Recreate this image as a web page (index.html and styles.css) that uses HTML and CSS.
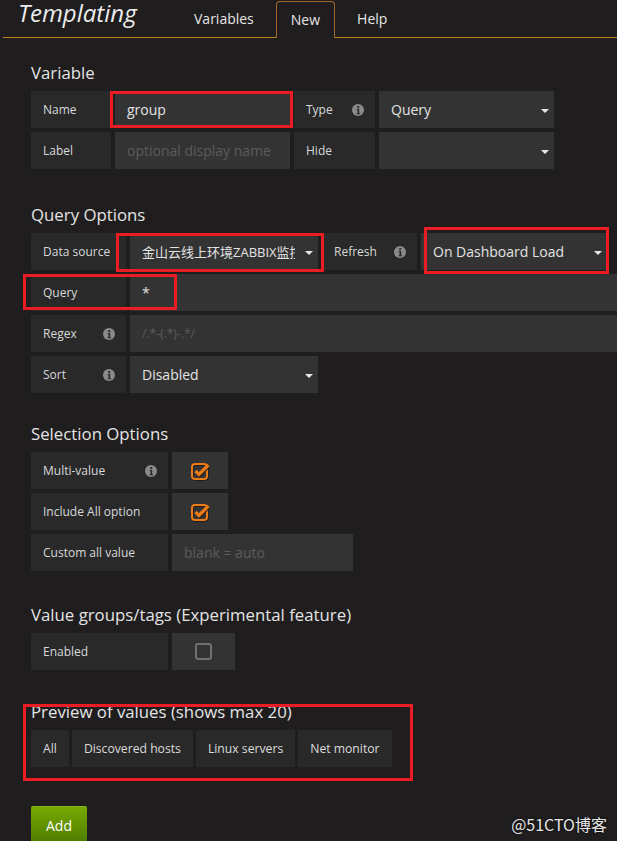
FILE: index.html
```html
<!DOCTYPE html>
<html>
<head>
<meta charset="utf-8">
<link rel="stylesheet" href="styles.css">
</head>
<body>
<div class="header">
  <div class="title">Templating</div>
  <div class="tabs">
    <div class="tab">Variables</div>
    <div class="tab active">New</div>
    <div class="tab">Help</div>
  </div>
</div>

<div class="content">
  <section class="sec mt-25">
    <h5>Variable</h5>
    <div class="rows">
      <div class="row">
        <div class="lbl w80">Name</div>
        <div class="inp w175">group</div>
        <div class="lbl w81">Type <svg class="info" viewBox="0 0 12 12"><circle cx="6" cy="6" r="6" fill="#8a8a8a"/><circle cx="6.2" cy="3.1" r="1.2" fill="#2a2a2a"/><path d="M4.6 5h2.6v4.2h0.9v1h-3.5v-1h0.9V6h-0.9z" fill="#2a2a2a"/></svg></div>
        <div class="sel w175"><span class="val">Query</span><i class="caret"></i></div>
      </div>
      <div class="row">
        <div class="lbl w80">Label</div>
        <div class="inp w175 ph">optional display name</div>
        <div class="lbl w81">Hide</div>
        <div class="sel w175"><span class="val"></span><i class="caret"></i></div>
      </div>
    </div>
  </section>

  <section class="sec mt-36">
    <h5>Query Options</h5>
    <div class="rows">
      <div class="row">
        <div class="lbl w95">Data source</div>
        <div class="sel w188"><span class="val cjk">金山云线上环境ZABBIX监控</span><i class="caret"></i></div>
        <div class="lbl w95">Refresh <svg class="info" viewBox="0 0 12 12"><circle cx="6" cy="6" r="6" fill="#8a8a8a"/><circle cx="6.2" cy="3.1" r="1.2" fill="#2a2a2a"/><path d="M4.6 5h2.6v4.2h0.9v1h-3.5v-1h0.9V6h-0.9z" fill="#2a2a2a"/></svg></div>
        <div class="sel w186"><span class="val">On Dashboard Load</span><i class="caret"></i></div>
      </div>
      <div class="row">
        <div class="lbl w95">Query</div>
        <div class="inp grow">*</div>
      </div>
      <div class="row">
        <div class="lbl w95">Regex <svg class="info" viewBox="0 0 12 12"><circle cx="6" cy="6" r="6" fill="#8a8a8a"/><circle cx="6.2" cy="3.1" r="1.2" fill="#2a2a2a"/><path d="M4.6 5h2.6v4.2h0.9v1h-3.5v-1h0.9V6h-0.9z" fill="#2a2a2a"/></svg></div>
        <div class="inp grow ph small">/.*-(.*)-.*/</div>
      </div>
      <div class="row">
        <div class="lbl w95">Sort <svg class="info" viewBox="0 0 12 12"><circle cx="6" cy="6" r="6" fill="#8a8a8a"/><circle cx="6.2" cy="3.1" r="1.2" fill="#2a2a2a"/><path d="M4.6 5h2.6v4.2h0.9v1h-3.5v-1h0.9V6h-0.9z" fill="#2a2a2a"/></svg></div>
        <div class="sel w188"><span class="val">Disabled</span><i class="caret"></i></div>
      </div>
    </div>
  </section>

  <section class="sec mt-31">
    <h5>Selection Options</h5>
    <div class="rows">
      <div class="row">
        <div class="lbl w137">Multi-value <svg class="info" viewBox="0 0 12 12"><circle cx="6" cy="6" r="6" fill="#8a8a8a"/><circle cx="6.2" cy="3.1" r="1.2" fill="#2a2a2a"/><path d="M4.6 5h2.6v4.2h0.9v1h-3.5v-1h0.9V6h-0.9z" fill="#2a2a2a"/></svg></div>
        <div class="chk w56"><svg class="tick" viewBox="0 0 24 22"><rect x="3" y="4" width="15" height="15" rx="3" fill="none" stroke="#1a1a1a" stroke-width="2" transform="translate(0.6 0.8)"/><rect x="3" y="4" width="15" height="15" rx="3" fill="none" stroke="#eb7b18" stroke-width="2"/><path d="M6.5 11l3.4 3.4L19.5 5" fill="none" stroke="#1a1a1a" stroke-width="3.4" transform="translate(0.6 0.8)"/><path d="M6.5 11l3.4 3.4L19.5 5" fill="none" stroke="#eb7b18" stroke-width="3.4"/></svg></div>
      </div>
      <div class="row">
        <div class="lbl w137">Include All option</div>
        <div class="chk w56"><svg class="tick" viewBox="0 0 24 22"><rect x="3" y="4" width="15" height="15" rx="3" fill="none" stroke="#1a1a1a" stroke-width="2" transform="translate(0.6 0.8)"/><rect x="3" y="4" width="15" height="15" rx="3" fill="none" stroke="#eb7b18" stroke-width="2"/><path d="M6.5 11l3.4 3.4L19.5 5" fill="none" stroke="#1a1a1a" stroke-width="3.4" transform="translate(0.6 0.8)"/><path d="M6.5 11l3.4 3.4L19.5 5" fill="none" stroke="#eb7b18" stroke-width="3.4"/></svg></div>
      </div>
      <div class="row">
        <div class="lbl w137">Custom all value</div>
        <div class="inp w181 ph">blank = auto</div>
      </div>
    </div>
  </section>

  <section class="sec mt-34">
    <h5>Value groups/tags (Experimental feature)</h5>
    <div class="rows">
      <div class="row">
        <div class="lbl w137">Enabled</div>
        <div class="chk w63"><span class="box"></span></div>
      </div>
    </div>
  </section>

  <section class="sec mt-32">
    <h5>Preview of values (shows max 20)</h5>
    <div class="tags">
      <div class="tag">All</div>
      <div class="tag">Discovered hosts</div>
      <div class="tag">Linux servers</div>
      <div class="tag">Net monitor</div>
    </div>
  </section>

  <div class="add">Add</div>
</div>

<div class="mark m-name"></div>
<div class="mark m-ds"></div>
<div class="mark m-query"></div>
<div class="mark m-refresh"></div>
<div class="mark m-preview"></div>

<div class="watermark">@51CTO博客</div>
</body>
</html>
```

FILE: styles.css
```css
* { box-sizing: border-box; }

html, body {
  margin: 0;
  height: 100%;
  overflow: hidden;
}

body {
  background: #1f1d1e;
  color: #d8d9da;
  font-family: "Open Sans", "Noto Sans CJK SC", sans-serif;
  position: relative;
}

/* header */
.header {
  margin-left: 3px;
  height: 38px;
  border-bottom: 1px solid #b8861c;
  display: flex;
  padding-left: 15px;
}

.title {
  width: 154px;
  font-size: 24px;
  font-style: italic;
  line-height: 26px;
  color: #ececec;
}

.tabs {
  display: flex;
  margin-top: 1px;
}

.tab {
  height: 37px;
  line-height: 36px;
  padding: 0 22px;
  font-size: 14px;
  color: #e6e6e6;
}

.tab.active {
  padding: 0 14px;
  border: 1px solid #a0662b;
  border-bottom: none;
  border-radius: 4px 4px 0 0;
  background: #1f1d1e;
}

/* content */
.content {
  padding-left: 31px;
}

.sec h5 {
  margin: 0 0 8px;
  font-size: 16.8px;
  line-height: 20px;
  font-weight: normal;
  color: #e4e4e4;
}

.mt-25 { margin-top: 25px; }
.mt-31 { margin-top: 31px; }
.mt-32 { margin-top: 32px; }
.mt-34 { margin-top: 34px; }
.mt-36 { margin-top: 36px; }

.rows {
  display: flex;
  flex-direction: column;
  gap: 4px;
}

.row {
  display: flex;
  gap: 4px;
  height: 37px;
}

.lbl {
  background: #292929;
  display: flex;
  align-items: center;
  justify-content: space-between;
  padding: 0 11px 0 12px;
  font-size: 12px;
  white-space: nowrap;
  color: #d8d9da;
  flex: none;
}

.info {
  width: 12px;
  height: 12px;
  flex: none;
}

.inp, .sel {
  background: #333333;
  display: flex;
  align-items: center;
  padding: 0 12px;
  font-size: 14px;
  color: #e3e3e3;
  flex: none;
  white-space: nowrap;
}

.inp.grow { flex: 1; }

.ph { color: #5c5c5c; }
.small { font-size: 12px; }

.sel { padding-right: 5px; }

.sel .val {
  flex: 1;
  overflow: hidden;
  white-space: nowrap;
  margin-right: 8px;
}

.sel .cjk {
  font-size: 13px;
  margin-right: 10px;
}

.caret {
  width: 0;
  height: 0;
  border-left: 4px solid transparent;
  border-right: 4px solid transparent;
  border-top: 4px solid #e8e8e8;
  margin-top: 2px;
  flex: none;
}

.chk {
  background: #333333;
  display: flex;
  align-items: center;
  justify-content: center;
  flex: none;
}

.tick {
  width: 24px;
  height: 22px;
  margin-left: 2px;
}

.box {
  width: 17px;
  height: 17px;
  border: 2px solid #707070;
  border-radius: 3px;
}

.w56 { width: 56px; }
.w63 { width: 63px; }
.w80 { width: 80px; }
.w81 { width: 81px; }
.w95 { width: 95px; }
.w137 { width: 137px; }
.w175 { width: 175px; }
.w181 { width: 181px; }
.w186 { width: 186px; }
.w188 { width: 188px; }

/* tags */
.tags {
  display: flex;
  gap: 3px;
}

.tag {
  background: #292929;
  height: 37px;
  padding: 0 12px;
  display: flex;
  align-items: center;
  font-size: 12.2px;
  color: #dcdcdc;
}

/* add button */
.add {
  margin-top: 39px;
  width: 56px;
  height: 37px;
  line-height: 37px;
  text-align: center;
  font-size: 14px;
  color: #ffffff;
  border-radius: 2px;
  background: linear-gradient(#76a900, #4e7c00);
  border-top: 1px solid #86b510;
}

/* red annotation overlays */
.mark {
  position: absolute;
  border: 3px solid #ec1c24;
}

.m-name { left: 110px; top: 91px; width: 183px; height: 37px; }
.m-ds { left: 116px; top: 233px; width: 208px; height: 39px; }
.m-query { left: 23px; top: 274px; width: 154px; height: 36px; }
.m-refresh { left: 424px; top: 227px; width: 185px; height: 47px; }
.m-preview { left: 23px; top: 704px; width: 390px; height: 77px; }

.watermark {
  position: absolute;
  right: 10px;
  top: 812px;
  font-family: "Noto Sans CJK SC", sans-serif;
  font-size: 16px;
  color: #e8e8e8;
  text-shadow: 0 0 2px #000;
}
```
